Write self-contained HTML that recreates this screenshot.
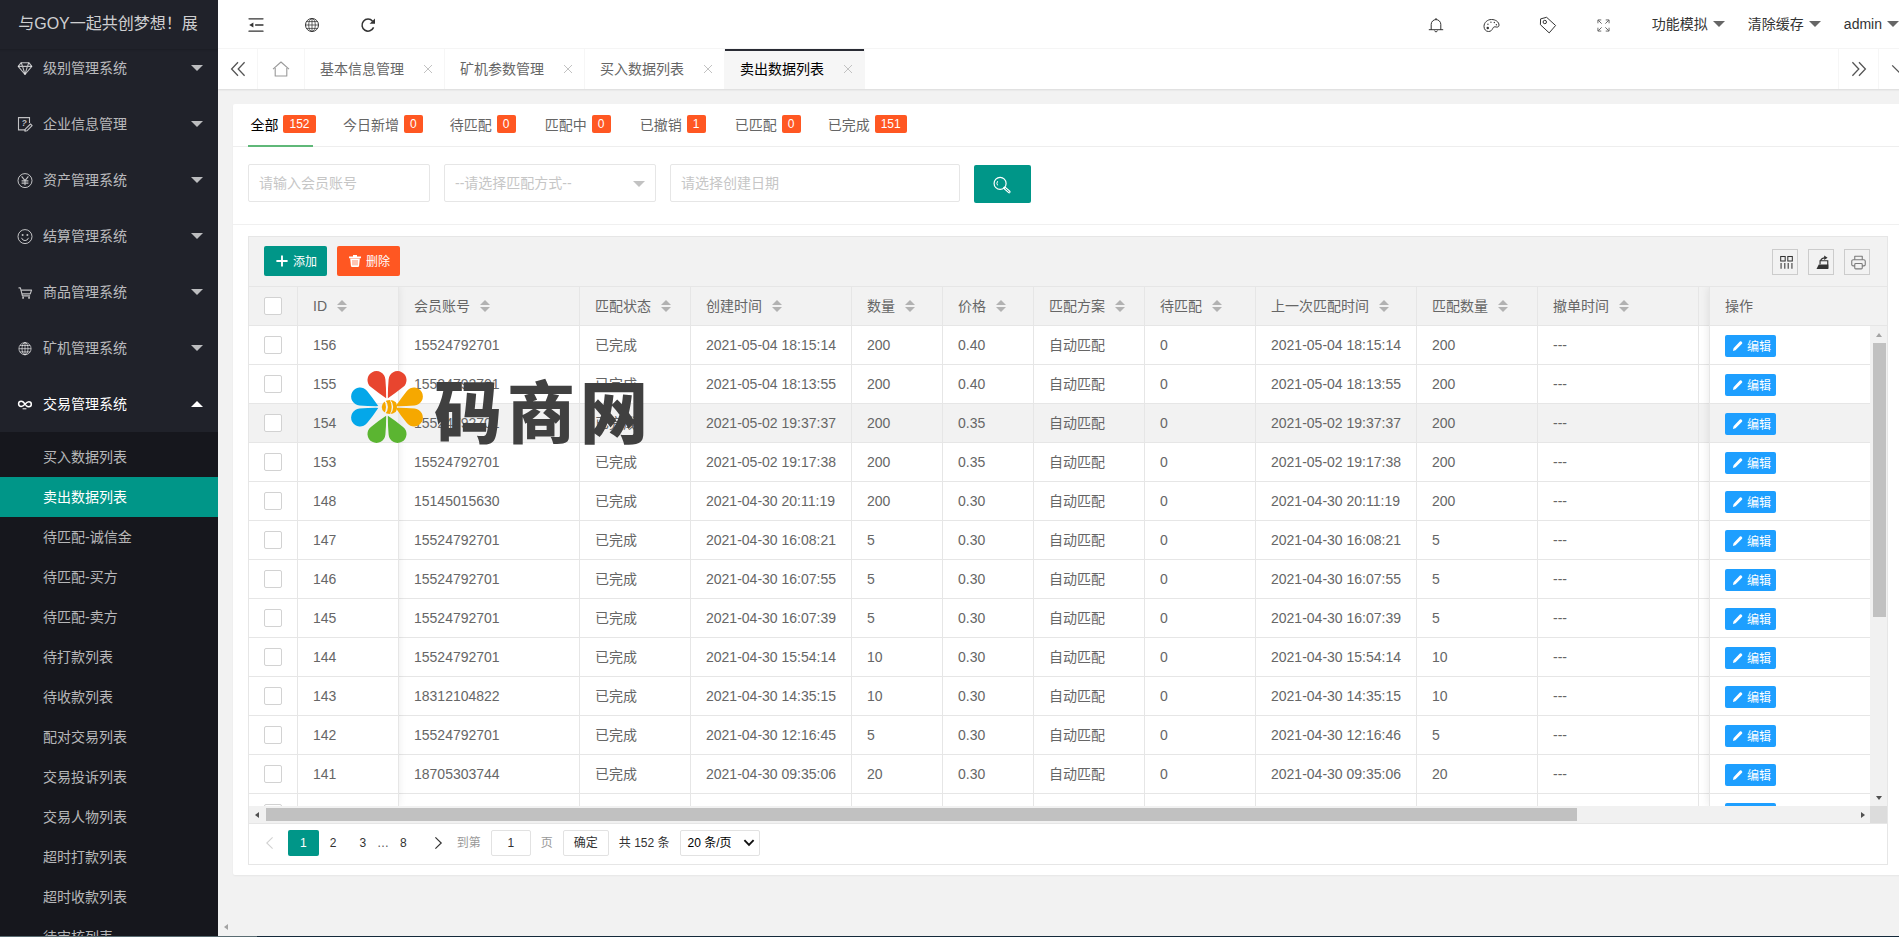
<!DOCTYPE html>
<html lang="zh-CN"><head><meta charset="utf-8"><title>卖出数据列表</title>
<style>
*{box-sizing:border-box;margin:0;padding:0}
html,body{width:1899px;height:937px;overflow:hidden}
body{position:relative;background:#f2f2f2;font:14px/24px "Liberation Sans","Noto Sans CJK SC",sans-serif;color:#666}
ul,li,dl,dd{list-style:none}
a{text-decoration:none;color:inherit}
svg{display:block}
cite{font-style:normal}
#app{position:absolute;left:-2px;top:-1px;width:1920px;height:940px;overflow:hidden;background:#f2f2f2}
/* header */
.header{position:absolute;left:220px;top:0;right:0;height:50px;background:#fff;border-bottom:1px solid #f6f6f6;color:#333}
.header ul{position:absolute;top:0;height:50px;display:flex}
.header .hl{left:10px}
.header .hr{right:16px}
.header li{height:50px;position:relative}
.header li a{display:flex;align-items:center;justify-content:center;height:50px;padding:2px 20px 0;line-height:48px;color:#333}
.header .hl li a,.header .hr li:not(.txt) a{width:56px;padding:2px 0 0}
.header li.txt a{padding:0 20px;position:relative}
.header .hmore{position:absolute;right:3px;top:22px;border:6px solid transparent;border-top-color:#666;width:0;height:0}
.header .hr li:nth-child(4) a{color:#666}
/* side */
.side{position:absolute;left:0;top:0;width:220px;height:940px;background:#20222A;overflow:hidden;z-index:5}
.logo{position:absolute;left:0;top:0;width:220px;height:50px;line-height:50px;text-align:center;color:rgba(255,255,255,.8);font-size:16px;white-space:nowrap;overflow:hidden;background:#20222A;z-index:3;box-shadow:0 1px 2px 0 rgba(0,0,0,.15)}
.nav{position:absolute;left:0;top:41px;width:220px}
.nav .item>a{display:block;position:relative;height:56px;line-height:56px;padding-left:45px;color:rgba(255,255,255,.7)}
.nav .item .ic{position:absolute;left:19px;top:20px;width:16px;height:16px;color:rgba(255,255,255,.72)}
.nav .more{position:absolute;right:15px;top:25px;width:0;height:0;border:6px solid transparent;border-top-color:rgba(255,255,255,.7)}
.nav .itemed>a{color:#fff}
.nav .itemed>a .ic{color:#fff}
.nav .itemed .more{top:19px;border-top-color:transparent;border-bottom-color:#fff}
.nav .child{background:rgba(0,0,0,.3);padding:5px 0}
.nav .child dd a{display:block;height:40px;line-height:40px;padding-left:45px;color:rgba(255,255,255,.7)}
.nav .child dd.this a{background:#009688;color:#fff}
/* page tabs */
.pagetabs{position:absolute;left:220px;top:50px;right:0;height:40px;background:#fff;box-shadow:0 1px 2px 0 rgba(0,0,0,.1);z-index:2}
.pagetabs .ctl{position:absolute;top:0;width:40px;height:40px;display:flex;align-items:center;justify-content:center;color:#555}
.pagetabs .prev{left:0;border-right:1px solid #f6f6f6}
.pagetabs .next{right:40px;border-left:1px solid #f6f6f6}
.pagetabs .down{right:0;border-left:1px solid #f6f6f6}
.ttitle{position:absolute;left:40px;top:0;height:40px;display:flex}
.ttitle li{position:relative;height:40px;line-height:40px;padding:0 40px 0 15px;border-right:1px solid #f6f6f6;color:#666;white-space:nowrap}
.ttitle li.home{padding:0 14px;width:47px;display:flex;align-items:center;color:#999}
.ttitle li .cl{position:absolute;right:8px;top:12px;width:16px;height:16px;display:flex;align-items:center;justify-content:center;color:#c2c2c2}
.ttitle li.this{background:#f6f6f6;color:#000}
.ttitle li.this:after{content:"";position:absolute;left:0;top:0;width:100%;height:2px;background:#292B34}
/* body */
.lbody{position:absolute;left:220px;top:90px;right:0;bottom:0}
.card{position:absolute;left:15px;top:15px;width:1670px;height:771px;background:#fff;border-radius:2px;box-shadow:0 1px 2px 0 rgba(0,0,0,.05)}
.btabs{position:absolute;left:0;top:2px;width:100%;height:41px;padding-left:15px;border-bottom:1px solid #eee;display:flex;white-space:nowrap}
.btabs li{position:relative;height:40px;line-height:38px;padding:0;min-width:65px;text-align:center;margin-right:30px;color:#666;font-size:14px}
.btabs li.this{color:#000}
.btabs li.this:after{content:"";position:absolute;left:0;top:0;width:100%;height:39px;border-bottom:2px solid #5FB878}
.badge{display:inline-block;position:relative;left:5px;top:-2px;height:18px;line-height:18px;padding:0 6px;font-size:12px;color:#fff;background:#FF5722;border-radius:2px;vertical-align:middle;text-align:center}
.sform{position:absolute;left:0;top:0}
.inp{position:absolute;top:60px;height:38px;line-height:36px;border:1px solid #e6e6e6;border-radius:2px;background:#fff;padding-left:10px;color:#c6c6c6;font-size:14px;white-space:nowrap}
.i1{left:15px;width:182px}
.i2{left:211px;width:212px}
.i3{left:437px;width:290px}
.i2 .edge{position:absolute;right:10px;top:16px;width:0;height:0;border:6px solid transparent;border-top-color:#c2c2c2}
.sbtn{position:absolute;left:741px;top:61px;width:57px;height:38px;background:#009688;border-radius:2px;color:#fff;display:flex;align-items:center;justify-content:center}
.hline{position:absolute;left:0;top:120px;width:100%;height:1px;background:#f0f0f0}
/* table */
.tview{position:absolute;left:15px;top:132px;width:1640px;height:629px;border:1px solid #e6e6e6;background:#fff}
.ttool{position:absolute;left:0;top:0;width:100%;height:50px;background:#f2f2f2;border-bottom:1px solid #e6e6e6}
.btn{position:absolute;top:9px;height:30px;line-height:30px;border-radius:2px;color:#fff;font-size:12px;display:flex;align-items:center;white-space:nowrap}
.btn svg{margin-right:5px}
.btn.add{left:15px;width:63px;background:#009688;padding-left:12px}
.btn.del{left:88px;width:63px;background:#FF5722;padding-left:12px}
.tself{position:absolute;right:17px;top:12px;display:flex}
.tbox{width:26px;height:26px;border:1px solid #ccc;margin-left:10px;display:flex;align-items:center;justify-content:center;color:#333}
.tbox:last-child{color:#7a7a7a}
.tbox svg{position:relative;left:1px;top:.7px}
.tbox-wrap{position:absolute;left:0;top:50px;width:1638px;height:536px;overflow:hidden}
table{border-collapse:separate;border-spacing:0;table-layout:fixed}
th,td{height:39px;padding:0;border:1px solid #e6e6e6;border-left:none;border-top:none;font-weight:400;text-align:left;font-size:14px;color:#666;white-space:nowrap;overflow:hidden}
th{background:#f2f2f2}
td{background:#fff}
tr.hov td{background:#f2f2f2}
.cell{height:28px;line-height:28px;padding:0 15px;position:relative;overflow:hidden;white-space:nowrap}
.cb{width:49px;text-align:center}
.chk{display:block;width:18px;height:18px;margin:0 0 0 15px;border:1px solid #d2d2d2;border-radius:2px;background:#fff}
.sort{display:inline-block;position:relative;width:10px;height:20px;margin-left:5px;vertical-align:middle}
.sort i{position:absolute;left:5px;width:0;height:0;border:5px solid transparent}
.sort .asc{top:3px;border-top:none;border-bottom:5px solid #b2b2b2}
.sort .desc{bottom:5px;border-bottom:none;border-top:5px solid #b2b2b2}
.tmain{position:absolute;left:0;top:0;width:2000px;height:519px;overflow:hidden}
.fixl{position:absolute;left:0;top:0;width:150px;height:519px;overflow:hidden;box-shadow:0 -1px 8px rgba(0,0,0,.08);background:#fff}
.fixr{position:absolute;left:1460px;top:0;width:178px;height:519px;overflow:hidden;border-left:1px solid #e6e6e6;box-shadow:-1px 0 8px rgba(0,0,0,.08);background:#fff}
.fixr table{width:178px}
.fixr th{border-right:none}
.ebtn{display:inline-flex;align-items:center;height:22px;line-height:22px;padding:0 5px 0 7px;background:#1E9FFF;color:#fff;font-size:12px;border-radius:2px;vertical-align:middle;width:51px}
.ebtn svg{margin-right:4px}
.ebtn span,.btn span{position:relative;top:.6px}
.vsb{position:absolute;left:1621px;top:39px;width:17px;height:480px;background:#f1f1f1}
.vsb .vth{position:absolute;left:3px;top:17px;width:13px;height:274px;background:#c1c1c1}
.vsb .au{position:absolute;left:5.7px;top:6.5px;border:3.6px solid transparent;border-top:none;border-bottom:4.2px solid #a3a3a3}
.vsb .ad{position:absolute;left:5.7px;bottom:6.5px;border:3.6px solid transparent;border-bottom:none;border-top:4.2px solid #505050}
.hsb{position:absolute;left:0;top:519px;width:1621px;height:17px;background:#f1f1f1}
.hsb .hth{position:absolute;left:17px;top:2px;width:1311px;height:13px;background:#c1c1c1}
.hsb .al{position:absolute;left:6px;top:5.5px;border:3.5px solid transparent;border-left:none;border-right:4.5px solid #505050}
.hsb .ar{position:absolute;right:5px;top:5.5px;border:3.5px solid transparent;border-right:none;border-left:4.5px solid #505050}
.corner{position:absolute;left:1621px;top:519px;width:17px;height:17px;background:#dcdcdc}
.hmask{display:none}
.tpage{position:absolute;left:0;top:586px;width:100%;height:41px;border-top:1px solid #e6e6e6;padding:6px 7px 0;font-size:12px;display:flex;align-items:flex-start;color:#333;white-space:nowrap}
.pg{display:block;height:26px;line-height:26px;padding:0 12px;margin-right:-1px;color:#333}
.pg.cur{background:#009688;color:#fff;border-radius:2px}
.pg.spr{padding:0;color:#555;width:12px;text-align:center}
.pg.pprev{color:#d2d2d2;padding:0 13px 0 8px;display:flex;align-items:center}
.pg.pnext{display:flex;align-items:center;justify-content:center;width:40px;padding:0}
.skip{margin-left:0;color:#999;height:26px;line-height:26px;display:flex}
.pinput{display:block;width:40px;height:26px;line-height:24px;margin:0 10px;border:1px solid #e2e2e2;border-radius:2px;text-align:center;color:#333;background:#fff}
.pbtn{display:block;height:26px;line-height:25.5px;margin-left:10px;padding:0 10px;border:1px solid #e2e2e2;border-radius:2px;color:#333;background:#fff}
.cnt{margin-left:10px;height:26px;line-height:26px;color:#333}
.psel{margin-left:10px;height:26px;line-height:24px;width:80px;border:1px solid #e2e2e2;border-radius:2px;padding-left:7px;color:#000;display:flex;align-items:center;justify-content:space-between;padding-right:4px;background:#fff}
/* watermark */
.wm{position:absolute;left:352px;top:368px;height:80px;z-index:20;display:flex;align-items:center}
.wm .fl{position:absolute;left:.3px;top:3.2px;width:74px;height:74px}
.wmt{position:absolute;left:84px;top:-1.5px;font:900 68px/96px "Liberation Sans","Noto Sans CJK SC",sans-serif;color:#404040;letter-spacing:5px;white-space:nowrap}
.iarrow{position:absolute;left:226px;top:925px;width:0;height:0;border:3.5px solid transparent;border-left:none;border-right:4.5px solid #a3a3a3;z-index:4}
.botline{position:absolute;left:0;top:936px;width:1899px;height:1px;background:linear-gradient(90deg,#5a6c72 0,#5a6c72 257px,#14293a 257px);z-index:30}

</style></head>
<body>
<div id="app">
<div class="header"><ul class="hl"><li><a><svg class="" style="" width="16" height="16" viewBox="0 0 16 16"><g fill="none" stroke="currentColor" stroke-width="1.3" stroke-linecap="round"><path d="M1 1.8h14M7.6 8h7.4M1 14.2h14"/></g><path d="M1.2 8l4.2-2.6v5.2z" fill="currentColor"/></svg></a></li><li><a><svg class="" style="" width="16" height="16" viewBox="0 0 16 16"><g fill="none" stroke="currentColor" stroke-width="0.75"><circle cx="8" cy="8" r="6.5" stroke-width="1"/><ellipse cx="8" cy="8" rx="3.3" ry="6.5"/><path d="M8 1.5v13M1.5 8h13M2.5 4.6h11M2.5 11.4h11"/></g></svg></a></li><li><a><svg class="" style="" width="16" height="16" viewBox="0 0 16 16"><g fill="none" stroke="currentColor" stroke-width="1.5"><path d="M13.6 10.4A6 6 0 1 1 12.6 4.2"/></g><path d="M15 1.4v5.4H9.6z" fill="currentColor"/></svg></a></li></ul><ul class="hr"><li><a><svg class="" style="" width="16" height="16" viewBox="0 0 16 16"><g fill="none" stroke="currentColor" stroke-width="1" stroke-linecap="round"><path d="M1.2 12.7h13.6M3.2 12.6V7.4a4.8 4.8 0 0 1 9.6 0v5.2M6.6 13.9a1.5 1.5 0 0 0 2.8 0M8 1.4v1.2"/></g></svg></a></li><li><a><svg class="" style="" width="17" height="15" viewBox="0 0 18 16"><g fill="none" stroke="currentColor" stroke-width="1.05"><path d="M9 1.6c4.4 0 8 2.6 8 6 0 2-1.6 2.4-3 2-1.8-.6-3 0-3.6 1.4-.8 1.8-2 3.4-4.6 3.4C3 14.4 1 12 1 9c0-4.2 3.6-7.4 8-7.4z"/></g><circle cx="5" cy="10.6" r="1.3" fill="currentColor"/><circle cx="5.2" cy="6.6" r=".75" fill="currentColor"/><circle cx="8.4" cy="4.4" r=".75" fill="currentColor"/><circle cx="12" cy="4.8" r=".75" fill="currentColor"/><circle cx="14.2" cy="7.2" r=".75" fill="currentColor"/></svg></a></li><li><a><svg class="" style="" width="18" height="18" viewBox="0 0 18 18"><g fill="none" stroke="currentColor" stroke-width="1" stroke-linejoin="round"><path d="M1.6 2.9l6-1.6 9 8.2-6.4 7.4L1.4 8.7z"/><circle cx="5.8" cy="6" r="1.7"/></g></svg></a></li><li><a><svg class="" style="" width="13" height="13" viewBox="0 0 14 14"><g fill="none" stroke="currentColor" stroke-width="1.05"><path d="M1 4.6V1h3.6M1.2 1.2l3.8 3.8M9.4 1H13v3.6M12.8 1.2L9 5M1 9.4V13h3.6M1.2 12.8L5 9M13 9.4V13H9.4M12.8 12.8L9 9"/></g></svg></a></li><li class="txt"><a><cite>功能模拟</cite><span class="hmore"></span></a></li><li class="txt"><a><cite>清除缓存</cite><span class="hmore"></span></a></li><li class="txt"><a><cite>admin</cite><span class="hmore"></span></a></li></ul></div>
<div class="side"><div class="logo">与GOY一起共创梦想！展</div><ul class="nav"><li class="item"><a><i class="ic"><svg class="" style="" width="16" height="16" viewBox="0 0 16 16"><g fill="none" stroke="currentColor" stroke-width="1.1" stroke-linejoin="round"><path d="M4.2 2.7h7.6L14.8 6.4 8 14.5 1.2 6.4z"/><path d="M1.2 6.4h13.6M5.6 6.4l2.4 8.1M10.4 6.4 8 14.5M4.2 2.7l1.4 3.7M11.8 2.7l-1.4 3.7"/></g></svg></i><cite>级别管理系统</cite><span class="more"></span></a></li><li class="item"><a><i class="ic"><svg class="" style="" width="16" height="16" viewBox="0 0 16 16"><g fill="none" stroke="currentColor" stroke-width="1.1"><path d="M12.5 7V1.6h-11v12.3H8"/><path d="M8.3 13.2l5.2-5.2 1.6 1.6-5.2 5.2-2 .4z" stroke-linejoin="round"/></g><text x="7" y="10" font-size="8.5" font-family="Liberation Sans,sans-serif" font-weight="bold" text-anchor="middle" fill="currentColor">?</text></svg></i><cite>企业信息管理</cite><span class="more"></span></a></li><li class="item"><a><i class="ic"><svg class="" style="" width="16" height="16" viewBox="0 0 16 16"><g fill="none" stroke="currentColor" stroke-width="1" transform="translate(0 .6)"><circle cx="8" cy="8" r="7"/><path d="M4.6 3.8L8 8l3.4-4.2M8 8v4.6M4.6 8.3h6.8M4.6 10.5h6.8" stroke-width="1.15"/></g></svg></i><cite>资产管理系统</cite><span class="more"></span></a></li><li class="item"><a><i class="ic"><svg class="" style="" width="16" height="16" viewBox="0 0 16 16"><g transform="translate(0 .6)"><g fill="none" stroke="currentColor" stroke-width="1"><circle cx="8" cy="8" r="7"/><path d="M4.6 9.6a3.6 3.6 0 0 0 6.8 0" stroke-linecap="round"/></g><circle cx="5.6" cy="6.3" r="1" fill="currentColor"/><circle cx="10.4" cy="6.3" r="1" fill="currentColor"/></g></svg></i><cite>结算管理系统</cite><span class="more"></span></a></li><li class="item"><a><i class="ic"><svg class="" style="" width="16" height="16" viewBox="0 0 16 16"><g transform="translate(.6 1.9) scale(.93)"><g fill="none" stroke="currentColor" stroke-width="1.25" stroke-linejoin="round"><path d="M1 2.2h2l2.2 8.6h8.2"/><path d="M4 4.6h11l-1.4 4H5"/></g><rect x="5" y="11.6" width="1.8" height="2.2" fill="currentColor"/><rect x="11.4" y="11.6" width="1.8" height="2.2" fill="currentColor"/></g></svg></i><cite>商品管理系统</cite><span class="more"></span></a></li><li class="item"><a><i class="ic"><svg class="" style="" width="16" height="16" viewBox="0 0 16 16"><g fill="none" stroke="currentColor" stroke-width="0.85" transform="translate(0 .7)"><circle cx="8" cy="8" r="6.1"/><ellipse cx="8" cy="8" rx="3" ry="6.1"/><path d="M8 1.9v12.2M1.9 8h12.2M2.9 4.8h10.2M2.9 11.2h10.2"/></g></svg></i><cite>矿机管理系统</cite><span class="more"></span></a></li><li class="item itemed"><a><i class="ic"><svg class="" style="" width="16" height="16" viewBox="0 0 16 16"><g fill="none" stroke="currentColor" stroke-width="1.5" stroke-linecap="round"><path d="M8 8.2C6.8 6 5.6 5.2 4.2 5.2a2.6 2.6 0 0 0 0 5.2c1.2 0 2.2-.5 3.8-2.2 1.4-1.6 2.6-2.4 3.8-2.4a2.5 2.5 0 0 1 0 5c-1 0-1.9-.4-2.8-1.4"/><path d="M6 12.8h3" stroke-width="1"/></g></svg></i><cite>交易管理系统</cite><span class="more"></span></a><dl class="child"><dd><a>买入数据列表</a></dd><dd class="this"><a>卖出数据列表</a></dd><dd><a>待匹配-诚信金</a></dd><dd><a>待匹配-买方</a></dd><dd><a>待匹配-卖方</a></dd><dd><a>待打款列表</a></dd><dd><a>待收款列表</a></dd><dd><a>配对交易列表</a></dd><dd><a>交易投诉列表</a></dd><dd><a>交易人物列表</a></dd><dd><a>超时打款列表</a></dd><dd><a>超时收款列表</a></dd><dd><a>待审核列表</a></dd></dl></li></ul></div>
<div class="pagetabs"><div class="ctl prev"><svg class="" style="" width="16" height="16" viewBox="0 0 16 16"><g fill="none" stroke="currentColor" stroke-width="1.3"><path d="M8 1.2L1.6 8 8 14.8M14.6 1.2L8.2 8l6.4 6.8"/></g></svg></div><div class="ctl next"><svg class="" style="" width="16" height="16" viewBox="0 0 16 16"><g fill="none" stroke="currentColor" stroke-width="1.3"><path d="M1.4 1.2L7.8 8l-6.4 6.8M8 1.2L14.4 8 8 14.8"/></g></svg></div><div class="ctl down"><svg class="" style="" width="16" height="16" viewBox="0 0 16 16"><g fill="none" stroke="currentColor" stroke-width="1.3"><path d="M1.2 4.4L8 11.2l6.8-6.8"/></g></svg></div><ul class="ttitle"><li class="home"><svg class="" style="" width="18" height="16" viewBox="0 0 18 16"><g fill="none" stroke="currentColor" stroke-width="1.1" stroke-linejoin="round"><path d="M1 8.2L9 1l8 7.2"/><path d="M3.2 7v8h11.6V7"/></g></svg></li><li><span>基本信息管理</span><i class="cl"><svg class="" style="" width="10" height="10" viewBox="0 0 10 10"><g fill="none" stroke="currentColor" stroke-width="1"><path d="M1 1l8 8M9 1l-8 8"/></g></svg></i></li><li><span>矿机参数管理</span><i class="cl"><svg class="" style="" width="10" height="10" viewBox="0 0 10 10"><g fill="none" stroke="currentColor" stroke-width="1"><path d="M1 1l8 8M9 1l-8 8"/></g></svg></i></li><li><span>买入数据列表</span><i class="cl"><svg class="" style="" width="10" height="10" viewBox="0 0 10 10"><g fill="none" stroke="currentColor" stroke-width="1"><path d="M1 1l8 8M9 1l-8 8"/></g></svg></i></li><li class="this"><span>卖出数据列表</span><i class="cl"><svg class="" style="" width="10" height="10" viewBox="0 0 10 10"><g fill="none" stroke="currentColor" stroke-width="1"><path d="M1 1l8 8M9 1l-8 8"/></g></svg></i></li></ul></div>
<div class="lbody"><div class="card"><ul class="btabs"><li class="this">全部<span class="badge">152</span></li><li>今日新增<span class="badge">0</span></li><li>待匹配<span class="badge">0</span></li><li>匹配中<span class="badge">0</span></li><li>已撤销<span class="badge">1</span></li><li>已匹配<span class="badge">0</span></li><li>已完成<span class="badge">151</span></li></ul><div class="sform"><div class="inp i1">请输入会员账号</div><div class="inp i2">--请选择匹配方式--<i class="edge"></i></div><div class="inp i3">请选择创建日期</div><a class="sbtn"><svg class="" style="" width="20" height="20" viewBox="0 0 20 20"><g fill="none" stroke="currentColor"><circle cx="7.1" cy="9.4" r="6" stroke-width="1.2"/><path d="M11.6 13.9l4.6 4" stroke-width="2.8" stroke-linecap="round"/><path d="M12.4 14.6l3.7 3.2" stroke="#009688" stroke-width="0.9" stroke-linecap="round"/><path d="M4.6 7.2a3.6 3.6 0 0 0 0 4.2" stroke-width="1"/></g></svg></a></div><div class="hline"></div><div class="tview"><div class="ttool"><a class="btn add"><svg class="" style="" width="12" height="12" viewBox="0 0 12 12"><path d="M6 .4v11.2M.4 6h11.2" fill="none" stroke="currentColor" stroke-width="1.9"/></svg><span>添加</span></a><a class="btn del"><svg class="" style="" width="12" height="12" viewBox="0 0 12 12"><path d="M0 1.4h12v1.8H0zM4 0h4v1.4H4z" fill="currentColor"/><path d="M1.2 3.6h9.6l-.7 7.2a1.3 1.3 0 0 1-1.3 1.2H3.2a1.3 1.3 0 0 1-1.3-1.2z" fill="currentColor"/><path d="M4 5v5.4M6 5v5.4M8 5v5.4" stroke="#FF5722" stroke-width=".7"/></svg><span>删除</span></a><div class="tself"><div class="tbox"><svg class="" style="" width="15" height="15" viewBox="0 0 16 16"><g fill="none" stroke="currentColor" stroke-width="1.1"><rect x="1.8" y="1.6" width="4.8" height="4.8"/><rect x="9.4" y="1.6" width="4.8" height="4.8"/><path d="M2.2 8.6v6M6.2 8.6v6M9.8 8.6v6M13.8 8.6v6"/></g></svg></div><div class="tbox"><svg class="" style="" width="15" height="15" viewBox="0 0 16 16"><path d="M1.6 14.8h12.6V10H4z" fill="currentColor"/><g fill="none" stroke="currentColor" stroke-width="1.2"><path d="M5.4 9.8V6.2h8.2v8"/><path d="M6 6.4c.4-2.2 1.8-3.4 4.6-3.4"/></g><path d="M9.8.6l3.6 2.4-3.6 2.4z" fill="currentColor"/></svg></div><div class="tbox"><svg class="" style="" width="15" height="15" viewBox="0 0 16 16"><g fill="none" stroke="currentColor" stroke-width="1.15" stroke-linejoin="round"><path d="M4 5V1.4h8V5"/><path d="M4 11.6H2.2A1.4 1.4 0 0 1 .8 10.2V6.6A1.6 1.6 0 0 1 2.4 5h11.2a1.6 1.6 0 0 1 1.6 1.6v3.6a1.4 1.4 0 0 1-1.4 1.4H12"/><rect x="4" y="9" width="8" height="5.8" rx="1"/></g></svg></div></div></div><div class="tbox-wrap"><div class="tmain"><table><thead><tr><th class="cb" style="width:49px"><span class="chk"></span></th><th style="width:101px"><div class="cell">ID<span class="sort"><i class="asc"></i><i class="desc"></i></span></div></th><th style="width:181px"><div class="cell">会员账号<span class="sort"><i class="asc"></i><i class="desc"></i></span></div></th><th style="width:111px"><div class="cell">匹配状态<span class="sort"><i class="asc"></i><i class="desc"></i></span></div></th><th style="width:161px"><div class="cell">创建时间<span class="sort"><i class="asc"></i><i class="desc"></i></span></div></th><th style="width:91px"><div class="cell">数量<span class="sort"><i class="asc"></i><i class="desc"></i></span></div></th><th style="width:91px"><div class="cell">价格<span class="sort"><i class="asc"></i><i class="desc"></i></span></div></th><th style="width:111px"><div class="cell">匹配方案<span class="sort"><i class="asc"></i><i class="desc"></i></span></div></th><th style="width:111px"><div class="cell">待匹配<span class="sort"><i class="asc"></i><i class="desc"></i></span></div></th><th style="width:161px"><div class="cell">上一次匹配时间<span class="sort"><i class="asc"></i><i class="desc"></i></span></div></th><th style="width:121px"><div class="cell">匹配数量<span class="sort"><i class="asc"></i><i class="desc"></i></span></div></th><th style="width:161px"><div class="cell">撤单时间<span class="sort"><i class="asc"></i><i class="desc"></i></span></div></th><th style="width:161px"><div class="cell">完成时间<span class="sort"><i class="asc"></i><i class="desc"></i></span></div></th></tr></thead><tbody><tr><td class="cb"><span class="chk"></span></td><td><div class="cell">156</div></td><td><div class="cell">15524792701</div></td><td><div class="cell">已完成</div></td><td><div class="cell">2021-05-04 18:15:14</div></td><td><div class="cell">200</div></td><td><div class="cell">0.40</div></td><td><div class="cell">自动匹配</div></td><td><div class="cell">0</div></td><td><div class="cell">2021-05-04 18:15:14</div></td><td><div class="cell">200</div></td><td><div class="cell">---</div></td><td><div class="cell">---</div></td></tr><tr><td class="cb"><span class="chk"></span></td><td><div class="cell">155</div></td><td><div class="cell">15524792701</div></td><td><div class="cell">已完成</div></td><td><div class="cell">2021-05-04 18:13:55</div></td><td><div class="cell">200</div></td><td><div class="cell">0.40</div></td><td><div class="cell">自动匹配</div></td><td><div class="cell">0</div></td><td><div class="cell">2021-05-04 18:13:55</div></td><td><div class="cell">200</div></td><td><div class="cell">---</div></td><td><div class="cell">---</div></td></tr><tr class="hov"><td class="cb"><span class="chk"></span></td><td><div class="cell">154</div></td><td><div class="cell">15524792701</div></td><td><div class="cell">已完成</div></td><td><div class="cell">2021-05-02 19:37:37</div></td><td><div class="cell">200</div></td><td><div class="cell">0.35</div></td><td><div class="cell">自动匹配</div></td><td><div class="cell">0</div></td><td><div class="cell">2021-05-02 19:37:37</div></td><td><div class="cell">200</div></td><td><div class="cell">---</div></td><td><div class="cell">---</div></td></tr><tr><td class="cb"><span class="chk"></span></td><td><div class="cell">153</div></td><td><div class="cell">15524792701</div></td><td><div class="cell">已完成</div></td><td><div class="cell">2021-05-02 19:17:38</div></td><td><div class="cell">200</div></td><td><div class="cell">0.35</div></td><td><div class="cell">自动匹配</div></td><td><div class="cell">0</div></td><td><div class="cell">2021-05-02 19:17:38</div></td><td><div class="cell">200</div></td><td><div class="cell">---</div></td><td><div class="cell">---</div></td></tr><tr><td class="cb"><span class="chk"></span></td><td><div class="cell">148</div></td><td><div class="cell">15145015630</div></td><td><div class="cell">已完成</div></td><td><div class="cell">2021-04-30 20:11:19</div></td><td><div class="cell">200</div></td><td><div class="cell">0.30</div></td><td><div class="cell">自动匹配</div></td><td><div class="cell">0</div></td><td><div class="cell">2021-04-30 20:11:19</div></td><td><div class="cell">200</div></td><td><div class="cell">---</div></td><td><div class="cell">---</div></td></tr><tr><td class="cb"><span class="chk"></span></td><td><div class="cell">147</div></td><td><div class="cell">15524792701</div></td><td><div class="cell">已完成</div></td><td><div class="cell">2021-04-30 16:08:21</div></td><td><div class="cell">5</div></td><td><div class="cell">0.30</div></td><td><div class="cell">自动匹配</div></td><td><div class="cell">0</div></td><td><div class="cell">2021-04-30 16:08:21</div></td><td><div class="cell">5</div></td><td><div class="cell">---</div></td><td><div class="cell">---</div></td></tr><tr><td class="cb"><span class="chk"></span></td><td><div class="cell">146</div></td><td><div class="cell">15524792701</div></td><td><div class="cell">已完成</div></td><td><div class="cell">2021-04-30 16:07:55</div></td><td><div class="cell">5</div></td><td><div class="cell">0.30</div></td><td><div class="cell">自动匹配</div></td><td><div class="cell">0</div></td><td><div class="cell">2021-04-30 16:07:55</div></td><td><div class="cell">5</div></td><td><div class="cell">---</div></td><td><div class="cell">---</div></td></tr><tr><td class="cb"><span class="chk"></span></td><td><div class="cell">145</div></td><td><div class="cell">15524792701</div></td><td><div class="cell">已完成</div></td><td><div class="cell">2021-04-30 16:07:39</div></td><td><div class="cell">5</div></td><td><div class="cell">0.30</div></td><td><div class="cell">自动匹配</div></td><td><div class="cell">0</div></td><td><div class="cell">2021-04-30 16:07:39</div></td><td><div class="cell">5</div></td><td><div class="cell">---</div></td><td><div class="cell">---</div></td></tr><tr><td class="cb"><span class="chk"></span></td><td><div class="cell">144</div></td><td><div class="cell">15524792701</div></td><td><div class="cell">已完成</div></td><td><div class="cell">2021-04-30 15:54:14</div></td><td><div class="cell">10</div></td><td><div class="cell">0.30</div></td><td><div class="cell">自动匹配</div></td><td><div class="cell">0</div></td><td><div class="cell">2021-04-30 15:54:14</div></td><td><div class="cell">10</div></td><td><div class="cell">---</div></td><td><div class="cell">---</div></td></tr><tr><td class="cb"><span class="chk"></span></td><td><div class="cell">143</div></td><td><div class="cell">18312104822</div></td><td><div class="cell">已完成</div></td><td><div class="cell">2021-04-30 14:35:15</div></td><td><div class="cell">10</div></td><td><div class="cell">0.30</div></td><td><div class="cell">自动匹配</div></td><td><div class="cell">0</div></td><td><div class="cell">2021-04-30 14:35:15</div></td><td><div class="cell">10</div></td><td><div class="cell">---</div></td><td><div class="cell">---</div></td></tr><tr><td class="cb"><span class="chk"></span></td><td><div class="cell">142</div></td><td><div class="cell">15524792701</div></td><td><div class="cell">已完成</div></td><td><div class="cell">2021-04-30 12:16:45</div></td><td><div class="cell">5</div></td><td><div class="cell">0.30</div></td><td><div class="cell">自动匹配</div></td><td><div class="cell">0</div></td><td><div class="cell">2021-04-30 12:16:46</div></td><td><div class="cell">5</div></td><td><div class="cell">---</div></td><td><div class="cell">---</div></td></tr><tr><td class="cb"><span class="chk"></span></td><td><div class="cell">141</div></td><td><div class="cell">18705303744</div></td><td><div class="cell">已完成</div></td><td><div class="cell">2021-04-30 09:35:06</div></td><td><div class="cell">20</div></td><td><div class="cell">0.30</div></td><td><div class="cell">自动匹配</div></td><td><div class="cell">0</div></td><td><div class="cell">2021-04-30 09:35:06</div></td><td><div class="cell">20</div></td><td><div class="cell">---</div></td><td><div class="cell">---</div></td></tr><tr><td class="cb"><span class="chk"></span></td><td><div class="cell">140</div></td><td><div class="cell"></div></td><td><div class="cell"></div></td><td><div class="cell"></div></td><td><div class="cell"></div></td><td><div class="cell"></div></td><td><div class="cell"></div></td><td><div class="cell"></div></td><td><div class="cell"></div></td><td><div class="cell"></div></td><td><div class="cell"></div></td><td><div class="cell"></div></td></tr></tbody></table></div><div class="fixl"><table><thead><tr><th class="cb" style="width:49px"><span class="chk"></span></th><th style="width:101px"><div class="cell">ID<span class="sort"><i class="asc"></i><i class="desc"></i></span></div></th></tr></thead><tbody><tr><td class="cb"><span class="chk"></span></td><td><div class="cell">156</div></td></tr><tr><td class="cb"><span class="chk"></span></td><td><div class="cell">155</div></td></tr><tr class="hov"><td class="cb"><span class="chk"></span></td><td><div class="cell">154</div></td></tr><tr><td class="cb"><span class="chk"></span></td><td><div class="cell">153</div></td></tr><tr><td class="cb"><span class="chk"></span></td><td><div class="cell">148</div></td></tr><tr><td class="cb"><span class="chk"></span></td><td><div class="cell">147</div></td></tr><tr><td class="cb"><span class="chk"></span></td><td><div class="cell">146</div></td></tr><tr><td class="cb"><span class="chk"></span></td><td><div class="cell">145</div></td></tr><tr><td class="cb"><span class="chk"></span></td><td><div class="cell">144</div></td></tr><tr><td class="cb"><span class="chk"></span></td><td><div class="cell">143</div></td></tr><tr><td class="cb"><span class="chk"></span></td><td><div class="cell">142</div></td></tr><tr><td class="cb"><span class="chk"></span></td><td><div class="cell">141</div></td></tr><tr><td class="cb"><span class="chk"></span></td><td><div class="cell">140</div></td></tr></tbody></table></div><div class="fixr"><table><thead><tr><th style="width:161px"><div class="cell">操作</div></th></tr></thead><tbody><tr><td><div class="cell"><a class="ebtn"><svg class="" style="" width="12" height="12" viewBox="0 0 12 12"><path d="M8.6 1.2a1.2 1.2 0 0 1 1.7 0l.6.6a1.2 1.2 0 0 1 0 1.7L3.8 10.6 1 11.4l.7-2.9z" fill="currentColor"/></svg><span>编辑</span></a></div></td></tr><tr><td><div class="cell"><a class="ebtn"><svg class="" style="" width="12" height="12" viewBox="0 0 12 12"><path d="M8.6 1.2a1.2 1.2 0 0 1 1.7 0l.6.6a1.2 1.2 0 0 1 0 1.7L3.8 10.6 1 11.4l.7-2.9z" fill="currentColor"/></svg><span>编辑</span></a></div></td></tr><tr class="hov"><td><div class="cell"><a class="ebtn"><svg class="" style="" width="12" height="12" viewBox="0 0 12 12"><path d="M8.6 1.2a1.2 1.2 0 0 1 1.7 0l.6.6a1.2 1.2 0 0 1 0 1.7L3.8 10.6 1 11.4l.7-2.9z" fill="currentColor"/></svg><span>编辑</span></a></div></td></tr><tr><td><div class="cell"><a class="ebtn"><svg class="" style="" width="12" height="12" viewBox="0 0 12 12"><path d="M8.6 1.2a1.2 1.2 0 0 1 1.7 0l.6.6a1.2 1.2 0 0 1 0 1.7L3.8 10.6 1 11.4l.7-2.9z" fill="currentColor"/></svg><span>编辑</span></a></div></td></tr><tr><td><div class="cell"><a class="ebtn"><svg class="" style="" width="12" height="12" viewBox="0 0 12 12"><path d="M8.6 1.2a1.2 1.2 0 0 1 1.7 0l.6.6a1.2 1.2 0 0 1 0 1.7L3.8 10.6 1 11.4l.7-2.9z" fill="currentColor"/></svg><span>编辑</span></a></div></td></tr><tr><td><div class="cell"><a class="ebtn"><svg class="" style="" width="12" height="12" viewBox="0 0 12 12"><path d="M8.6 1.2a1.2 1.2 0 0 1 1.7 0l.6.6a1.2 1.2 0 0 1 0 1.7L3.8 10.6 1 11.4l.7-2.9z" fill="currentColor"/></svg><span>编辑</span></a></div></td></tr><tr><td><div class="cell"><a class="ebtn"><svg class="" style="" width="12" height="12" viewBox="0 0 12 12"><path d="M8.6 1.2a1.2 1.2 0 0 1 1.7 0l.6.6a1.2 1.2 0 0 1 0 1.7L3.8 10.6 1 11.4l.7-2.9z" fill="currentColor"/></svg><span>编辑</span></a></div></td></tr><tr><td><div class="cell"><a class="ebtn"><svg class="" style="" width="12" height="12" viewBox="0 0 12 12"><path d="M8.6 1.2a1.2 1.2 0 0 1 1.7 0l.6.6a1.2 1.2 0 0 1 0 1.7L3.8 10.6 1 11.4l.7-2.9z" fill="currentColor"/></svg><span>编辑</span></a></div></td></tr><tr><td><div class="cell"><a class="ebtn"><svg class="" style="" width="12" height="12" viewBox="0 0 12 12"><path d="M8.6 1.2a1.2 1.2 0 0 1 1.7 0l.6.6a1.2 1.2 0 0 1 0 1.7L3.8 10.6 1 11.4l.7-2.9z" fill="currentColor"/></svg><span>编辑</span></a></div></td></tr><tr><td><div class="cell"><a class="ebtn"><svg class="" style="" width="12" height="12" viewBox="0 0 12 12"><path d="M8.6 1.2a1.2 1.2 0 0 1 1.7 0l.6.6a1.2 1.2 0 0 1 0 1.7L3.8 10.6 1 11.4l.7-2.9z" fill="currentColor"/></svg><span>编辑</span></a></div></td></tr><tr><td><div class="cell"><a class="ebtn"><svg class="" style="" width="12" height="12" viewBox="0 0 12 12"><path d="M8.6 1.2a1.2 1.2 0 0 1 1.7 0l.6.6a1.2 1.2 0 0 1 0 1.7L3.8 10.6 1 11.4l.7-2.9z" fill="currentColor"/></svg><span>编辑</span></a></div></td></tr><tr><td><div class="cell"><a class="ebtn"><svg class="" style="" width="12" height="12" viewBox="0 0 12 12"><path d="M8.6 1.2a1.2 1.2 0 0 1 1.7 0l.6.6a1.2 1.2 0 0 1 0 1.7L3.8 10.6 1 11.4l.7-2.9z" fill="currentColor"/></svg><span>编辑</span></a></div></td></tr><tr><td><div class="cell"><a class="ebtn"><svg class="" style="" width="12" height="12" viewBox="0 0 12 12"><path d="M8.6 1.2a1.2 1.2 0 0 1 1.7 0l.6.6a1.2 1.2 0 0 1 0 1.7L3.8 10.6 1 11.4l.7-2.9z" fill="currentColor"/></svg><span>编辑</span></a></div></td></tr></tbody></table></div><div class="hmask"></div><div class="vsb"><i class="au"></i><b class="vth"></b><i class="ad"></i></div><div class="hsb"><i class="al"></i><b class="hth"></b><i class="ar"></i></div><div class="corner"></div></div><div class="tpage"><a class="pg pprev"><svg class="" style="" width="12" height="14" viewBox="0 0 12 14"><path d="M8.6 1.4L2.8 7l5.8 5.6" fill="none" stroke="currentColor" stroke-width="1.1"/></svg></a><span class="pg cur">1</span><a class="pg">2</a><a class="pg">3</a><span class="pg spr">…</span><a class="pg">8</a><a class="pg pnext"><svg class="" style="" width="12" height="14" viewBox="0 0 12 14"><path d="M3.4 1.4L9.2 7l-5.8 5.6" fill="none" stroke="currentColor" stroke-width="1.2"/></svg></a><span class="skip">到第<span class="pinput">1</span>页<span class="pbtn">确定</span></span><span class="cnt">共 152 条</span><span class="psel"><span>20 条/页</span><svg class="" style="" width="12" height="8" viewBox="0 0 12 8"><path d="M1.4 1.2L6 5.8l4.6-4.6" fill="none" stroke="#111" stroke-width="1.9"/></svg></span></div></div></div></div>
<div class="wm"><svg class="fl" style="" width="76" height="76" viewBox="-38 -38 76 76"><g transform="rotate(0)"><path transform="translate(-0.9 -9) rotate(-28)" d="M0 0Q-4.6-8.4-8.4-17.4A9.2 9.2 0 1 1 8.4-17.4Q4.6-8.4 0 0z" fill="#E8452F"/></g><g transform="rotate(0)"><path transform="translate(0.9 -9) rotate(28)" d="M0 0Q-4.6-8.4-8.4-17.4A9.2 9.2 0 1 1 8.4-17.4Q4.6-8.4 0 0z" fill="#E8452F"/></g><g transform="rotate(90)"><path transform="translate(-0.9 -9) rotate(-28)" d="M0 0Q-4.6-8.4-8.4-17.4A9.2 9.2 0 1 1 8.4-17.4Q4.6-8.4 0 0z" fill="#F6A800"/></g><g transform="rotate(90)"><path transform="translate(0.9 -9) rotate(28)" d="M0 0Q-4.6-8.4-8.4-17.4A9.2 9.2 0 1 1 8.4-17.4Q4.6-8.4 0 0z" fill="#F6A800"/></g><g transform="rotate(180)"><path transform="translate(-0.9 -9) rotate(-28)" d="M0 0Q-4.6-8.4-8.4-17.4A9.2 9.2 0 1 1 8.4-17.4Q4.6-8.4 0 0z" fill="#5BB531"/></g><g transform="rotate(180)"><path transform="translate(0.9 -9) rotate(28)" d="M0 0Q-4.6-8.4-8.4-17.4A9.2 9.2 0 1 1 8.4-17.4Q4.6-8.4 0 0z" fill="#5BB531"/></g><g transform="rotate(270)"><path transform="translate(-0.9 -9) rotate(-28)" d="M0 0Q-4.6-8.4-8.4-17.4A9.2 9.2 0 1 1 8.4-17.4Q4.6-8.4 0 0z" fill="#04A7E9"/></g><g transform="rotate(270)"><path transform="translate(0.9 -9) rotate(28)" d="M0 0Q-4.6-8.4-8.4-17.4A9.2 9.2 0 1 1 8.4-17.4Q4.6-8.4 0 0z" fill="#04A7E9"/></g><clipPath id="beec"><ellipse cx="2.9" cy="0" rx="8.3" ry="7.3"/></clipPath><g clip-path="url(#beec)" fill="#F6A800"><circle cx="-13" cy="0" r="12"/><circle cx="-9.1" cy="0" r="12" fill="none" stroke="#F6A800" stroke-width="3.9"/><circle cx="-3.7" cy="0" r="12" fill="none" stroke="#F6A800" stroke-width="3.9"/></g></svg><span class="wmt">码商网</span></div>
<div class="iarrow"></div>
</div>
<div class="botline"></div>
</body></html>
